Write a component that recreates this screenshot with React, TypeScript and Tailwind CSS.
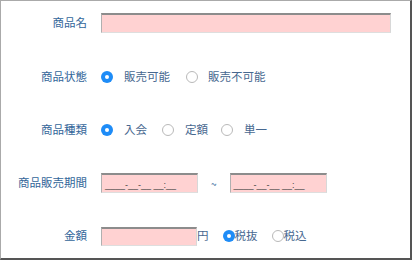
const font = "font-['Noto_Sans_CJK_JP','Noto_Sans',sans-serif]";

function Radio({ checked }: { checked?: boolean }) {
  if (checked) {
    return (
      <span className="flex h-[12px] w-[12px] shrink-0 items-center justify-center rounded-full bg-[#1e8cf7]">
        <span className="h-[4px] w-[4px] rounded-full bg-white" />
      </span>
    );
  }
  return <span className="block h-[12px] w-[12px] shrink-0 rounded-full border border-[#b9b9b9] bg-white" />;
}

function Field({ className, children }: { className: string; children?: React.ReactNode }) {
  return (
    <div
      className={`flex items-end border-t-2 border-l border-r border-b border-t-[#8c8c8c] border-l-[#b0b0b0] border-r-[#d8d8d8] border-b-[#dedede] bg-[#ffd2d2] ${className}`}
    >
      {children}
    </div>
  );
}

function DateField() {
  return (
    <Field className="h-[20px] w-[97px] pb-[1px] pl-[3px]">
      <span className="text-[9px] leading-[12px] text-[#444] font-['Liberation_Sans',sans-serif]">
        ____-__-__ __:__
      </span>
    </Field>
  );
}

function Row({ label, children }: { label: string; children: React.ReactNode }) {
  return (
    <div className="flex h-[20px] items-center">
      <div className="w-[86px] text-right text-[11.5px] text-[#33669a]">{label}</div>
      <div className="ml-[14px] flex items-center text-[11.5px] text-[#476890]">{children}</div>
    </div>
  );
}

export default function App() {
  return (
    <div
      className={`flex h-[260px] w-[412px] flex-col gap-[33px] border-t border-l border-r-2 border-b-2 border-t-[#aaa] border-l-[#aaa] border-r-[#555] border-b-[#555] bg-white pt-[12px] ${font}`}
    >
      <Row label="商品名">
        <Field className="h-[20px] w-[290px]" />
      </Row>

      <div className="mt-[1px]">
        <Row label="商品状態">
          <Radio checked />
          <span className="ml-[11px]">販売可能</span>
          <span className="ml-[16px] flex">
            <Radio />
          </span>
          <span className="ml-[10px]">販売不可能</span>
        </Row>
      </div>

      <Row label="商品種類">
        <Radio checked />
        <span className="ml-[11px]">入会</span>
        <span className="ml-[15px] flex">
          <Radio />
        </span>
        <span className="ml-[11px]">定額</span>
        <span className="ml-[13px] flex">
          <Radio />
        </span>
        <span className="ml-[11px]">単一</span>
      </Row>

      <Row label="商品販売期間">
        <DateField />
        <span className="ml-[13px] text-[10px] text-[#33669a]">~</span>
        <span className="ml-[13px]">
          <DateField />
        </span>
      </Row>

      <Row label="金額">
        <Field className="h-[19px] w-[96px]" />
        <span>円</span>
        <span className="ml-[14px] flex">
          <Radio checked />
        </span>
        <span>税抜</span>
        <span className="ml-[14px] flex">
          <Radio />
        </span>
        <span>税込</span>
      </Row>
    </div>
  );
}
